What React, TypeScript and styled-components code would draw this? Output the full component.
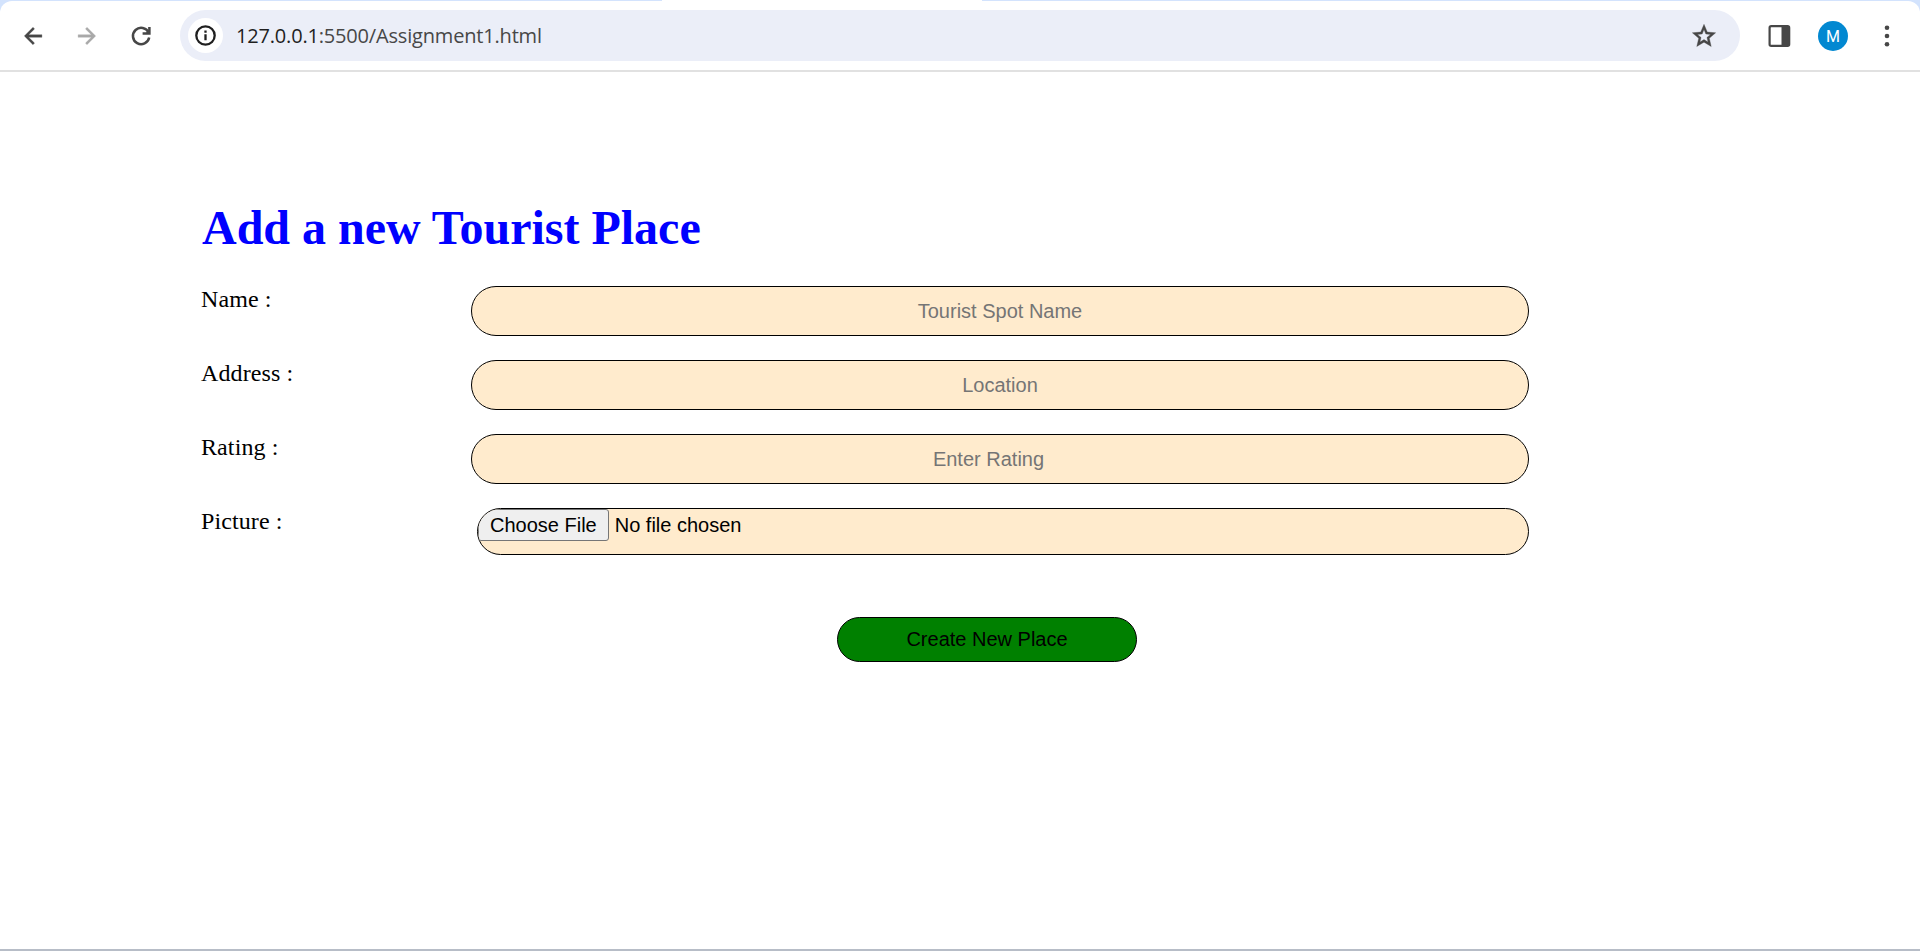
import React from "react";
import styled, { createGlobalStyle } from "styled-components";

const GlobalStyle = createGlobalStyle`
  *, *::before, *::after { box-sizing: border-box; }
  html, body { margin: 0; padding: 0; background: #fff; overflow: hidden; }
`;

const Window = styled.div`
  display: flex;
  flex-direction: column;
  height: 951px;
  background: #fff;
  border-bottom: 2px solid #b7bdc7;
`;

const TabStrip = styled.div`
  flex: none;
  height: 12px;
  margin-bottom: -11px;
  display: grid;
  grid-template-columns: 662px 320px 1fr;
  background: #d3e3fd;
`;

const ActiveTab = styled.div`
  grid-column: 2;
  background: #fff;
`;

const Toolbar = styled.header`
  flex: none;
  position: relative;
  height: 71px;
  display: flex;
  align-items: center;
  padding: 0 20px;
  background: #fff;
  border-bottom: 2px solid #e1e1e1;
  border-radius: 12px 12px 0 0;
`;

const ToolButton = styled.button<{ $gap?: number; $lead?: number; $muted?: boolean }>`
  flex: none;
  display: flex;
  align-items: center;
  justify-content: center;
  width: 26px;
  height: 26px;
  padding: 0;
  border: 0;
  margin: 0 ${(p) => p.$gap ?? 0}px 0 ${(p) => p.$lead ?? 0}px;
  background: none;
  color: ${(p) => (p.$muted ? "#a9a9a9" : "#474747")};
  svg { flex: none; }
`;

const AddressBar = styled.div`
  flex: 1;
  height: 51px;
  display: flex;
  align-items: center;
  padding: 0 23px 0 8px;
  border-radius: 26px;
  background: #ebeef8;
  color: #474747;
`;

const SiteInfo = styled.span`
  width: 35px;
  height: 35px;
  margin-right: 13px;
  display: grid;
  place-items: center;
  border-radius: 50%;
  background: #fff;
  color: #1f1f1f;
`;

const Url = styled.span`
  flex: 1;
  font: 20px/28px "Open Sans", sans-serif;
  letter-spacing: -0.18px;
  white-space: nowrap;
`;

const Host = styled.span`
  color: #1f1f1f;
`;

const Avatar = styled.span`
  width: 30px;
  height: 30px;
  margin-right: 26px;
  border-radius: 50%;
  background: #0288d1;
  color: #fff;
  font: 400 16px/31px Roboto, sans-serif;
  text-align: center;
`;

const Page = styled.main`
  padding: 127px 391px 0 201px;
  font: 24px/27px "Liberation Serif", "Times New Roman", serif;
  color: #000;
`;

const Title = styled.h1`
  margin: 0 0 30px;
  padding-left: 1px;
  font-size: 48px;
  line-height: 57px;
  font-weight: bold;
  color: #00f;
`;

const Row = styled.label`
  display: grid;
  grid-template-columns: 270px 1fr;
  align-items: start;
  height: 74px;
  letter-spacing: 0.1px;
`;

const Field = styled.input<{ $spinner?: boolean }>`
  width: 100%;
  height: 50px;
  padding: 0 ${(p) => (p.$spinner ? 23 : 0)}px 0 0;
  border: 1px solid #000;
  border-radius: 25px;
  background: #ffebcd;
  font: 20px "Liberation Sans", Arial, sans-serif;
  text-align: center;
  &::placeholder { color: #757575; opacity: 1; }
`;

const FileField = styled(Field)`
  width: calc(100% - 6px);
  height: 47px;
  margin-left: 6px;
  text-align: left;
  letter-spacing: normal;
  color: #000;
  overflow: hidden;
  &::file-selector-button {
    height: 32px;
    margin: 0 6px 0 0;
    padding: 1px 11px;
    border: 1px solid #767676;
    border-radius: 3px;
    background: #efefef;
    color: #000;
    font: 20px "Liberation Sans", Arial, sans-serif;
  }
`;

const SubmitButton = styled.button`
  display: block;
  width: 300px;
  height: 45px;
  margin: 35px 0 0 636px;
  padding: 0;
  border: 1px solid #000;
  border-radius: 25px;
  background: #008000;
  color: #000;
  font: 20px "Liberation Sans", Arial, sans-serif;
`;

const Icon = ({ d, size = 26 }: { d: string; size?: number }) => (
  <svg width={size} height={size} viewBox="0 0 24 24" fill="currentColor" stroke="currentColor" strokeWidth="0.3">
    <path d={d} />
  </svg>
);

const fields = [
  { label: "Name :", placeholder: "Tourist Spot Name" },
  { label: "Address :", placeholder: "Location" },
  { label: "Rating :", placeholder: "Enter Rating", spinner: true },
];

export default function App() {
  return (
    <>
      <GlobalStyle />
      <Window>
        <TabStrip>
          <ActiveTab />
        </TabStrip>
        <Toolbar>
          <ToolButton $gap={28} aria-label="Back">
            <Icon d="M20.2 10.8H8l5.4-5.3L12 4l-8 8 8 8 1.4-1.5L8 13.2h12.2z" />
          </ToolButton>
          <ToolButton $gap={28} $muted aria-label="Forward">
            <Icon d="M3.8 10.8H16l-5.400-5.300L12 4l8 8-8 8-1.400-1.500 5.400-5.300H3.800z" />
          </ToolButton>
          <ToolButton $gap={26} aria-label="Reload">
            <svg width="26" height="26" viewBox="0 0 26 26" fill="none" stroke="currentColor" strokeWidth="2.5">
              <path d="M20.6 9.6A8.2 8.2 0 1 0 21.2 14.6" />
              <path d="M21.4 4v6.6h-6.8" />
              <path d="M21.400 6.500v4.100h-4.100z" fill="currentColor" stroke="none" />
            </svg>
          </ToolButton>
          <AddressBar>
            <SiteInfo>
              <svg width="21" height="21" viewBox="0 0 21 21" fill="none" stroke="currentColor" strokeWidth="2.3">
                <circle cx="10.5" cy="10.5" r="9.2" />
                <path d="M10.5 9.3v6M10.5 5.500v2.300" />
              </svg>
            </SiteInfo>
            <Url>
              <Host>127.0.0.1</Host>:5500/Assignment1.html
            </Url>
            <ToolButton aria-label="Bookmark">
              <Icon
                size={28}
                d="M22 9.240l-7.190-.620L12 2 9.190 8.630 2 9.240l5.460 4.730L5.820 21 12 17.270 18.180 21l-1.630-7.030zM12 15.100l-3.460 2.100.920-3.940-3.060-2.650 4.040-.350L12 6.500l1.570 3.760 4.040.350-3.060 2.650.920 3.940z"
              />
            </ToolButton>
          </AddressBar>
          <ToolButton $gap={26} $lead={26} aria-label="Side panel">
            <svg width="26" height="26" viewBox="0 0 26 26">
              <rect x="3.6" y="3.1" width="19.6" height="19.8" rx="1.6" fill="none" stroke="currentColor" strokeWidth="2.2" />
              <path d="M15.5 3H23v20h-7.500z" fill="currentColor" />
            </svg>
          </ToolButton>
          <Avatar>M</Avatar>
          <ToolButton aria-label="Menu">
            <svg width="26" height="26" viewBox="0 0 26 26" fill="currentColor">
              <circle cx="13" cy="4.7" r="2.3" />
              <circle cx="13" cy="13" r="2.3" />
              <circle cx="13" cy="21.3" r="2.3" />
            </svg>
          </ToolButton>
        </Toolbar>
        <Page>
          <Title>Add a new Tourist Place</Title>
          {fields.map((f) => (
            <Row key={f.label}>
              {f.label}
              <Field type="text" placeholder={f.placeholder} $spinner={f.spinner} />
            </Row>
          ))}
          <Row>
            Picture :
            <FileField type="file" />
          </Row>
          <SubmitButton type="button">Create New Place</SubmitButton>
        </Page>
      </Window>
    </>
  );
}
